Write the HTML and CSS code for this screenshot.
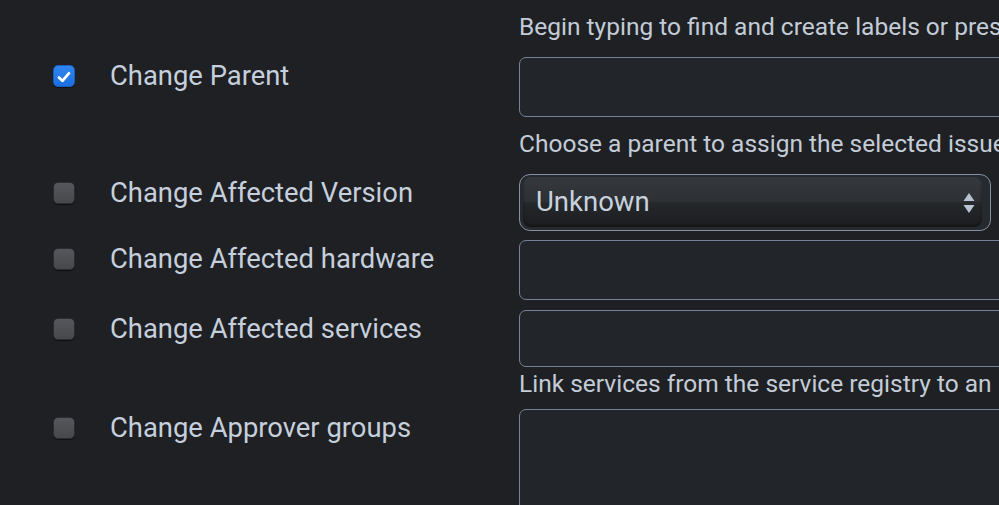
FILE: index.html
```html
<!DOCTYPE html>
<html lang="en">
<head>
<meta charset="utf-8">
<title>Bulk edit</title>
<link rel="stylesheet" href="styles.css">
</head>
<body>
<div class="form">
  <div class="row row-top">
    <div class="left"></div>
    <div class="right">
      <p class="help help-top">Begin typing to find and create labels or press down to select a suggested label.</p>
    </div>
  </div>

  <div class="row r1">
    <div class="left">
      <span class="cb checked"><svg viewBox="0 0 22 22" width="22" height="22"><path d="M5.5 11.5 L9.3 15.3 L16.5 6.8" fill="none" stroke="#fff" stroke-width="3" stroke-linecap="round" stroke-linejoin="round"/></svg></span>
      <span class="label">Change Parent</span>
    </div>
    <div class="right">
      <div class="input h60"></div>
      <p class="help help-1">Choose a parent to assign the selected issues to.</p>
    </div>
  </div>

  <div class="row r2">
    <div class="left">
      <span class="cb"></span>
      <span class="label">Change Affected Version</span>
    </div>
    <div class="right">
      <div class="select">
        <div class="select-inner">
          <span class="select-text">Unknown</span>
          <svg class="arrows" viewBox="0 0 14 22" width="14" height="22"><path d="M7 1 L12.5 9 L1.5 9 Z" fill="#b7c3d2"/><path d="M7 21 L12.5 13 L1.5 13 Z" fill="#b7c3d2"/></svg>
        </div>
      </div>
    </div>
  </div>

  <div class="row r3">
    <div class="left">
      <span class="cb"></span>
      <span class="label">Change Affected hardware</span>
    </div>
    <div class="right">
      <div class="input h60"></div>
    </div>
  </div>

  <div class="row r4">
    <div class="left">
      <span class="cb"></span>
      <span class="label">Change Affected services</span>
    </div>
    <div class="right">
      <div class="input h57"></div>
      <p class="help help-4">Link services from the service registry to an issue.</p>
    </div>
  </div>

  <div class="row r5">
    <div class="left">
      <span class="cb"></span>
      <span class="label">Change Approver groups</span>
    </div>
    <div class="right">
      <div class="input textarea"></div>
    </div>
  </div>
</div>
</body>
</html>
```

FILE: styles.css
```css
html, body {
  margin: 0;
  padding: 0;
  background: #1e2024;
  overflow: hidden;
  height: 505px;
}

.form {
  padding-top: 12px;
  font-family: Roboto, Inter, "Noto Sans", sans-serif;
  color: #c6cfdb;
}

.row {
  display: grid;
  grid-template-columns: 519px 620px;
}

.left {
  display: flex;
  align-items: center;
  height: 38px;
}

.row-top .left { height: auto; }

.cb {
  box-sizing: border-box;
  width: 22px;
  height: 22px;
  margin-left: 53px;
  margin-right: 35px;
  border-radius: 5px;
  background: linear-gradient(#55575c, #46484c);
  border: 1px solid #2b2d31;
  box-shadow: 0 1px 1px rgba(0,0,0,0.5);
  flex: none;
  display: flex;
}

.cb.checked {
  background: linear-gradient(#2f86f0, #1b6fe0);
  border-color: #1a5fc0;
}

.label {
  font-size: 27.4px;
  line-height: 30px;
  white-space: nowrap;
}

.help {
  margin: 0;
  font-size: 24.5px;
  line-height: 30px;
  white-space: nowrap;
  color: #c3ccd7;
}

.input {
  box-sizing: border-box;
  border: 1.5px solid #75839a;
  border-radius: 7px;
  background: #22262a;
}

.h60 { height: 60px; }
.h57 { height: 57px; }
.textarea { height: 130px; }

.r1 { margin-top: 15px; }
.help-1 { margin-top: 12px; }
.r2 { margin-top: 15px; }
.r3 { margin-top: 9px; }
.r4 { margin-top: 10px; }
.help-4 { margin-top: 2px; }
.r5 { margin-top: 10px; }

.select {
  box-sizing: border-box;
  width: 472px;
  height: 57px;
  border: 1.5px solid #8391a5;
  border-radius: 11px;
  background: #26292d;
  padding: 2px 8px 3px 3px;
}

.select-inner {
  height: 100%;
  border-radius: 8px;
  background: linear-gradient(#35383c 0%, #2d3034 48%, #25282b 52%, #1b1d20 100%);
  box-shadow: inset 0 -2px 3px rgba(0,0,0,0.35);
  display: flex;
  align-items: center;
  justify-content: space-between;
  padding: 0 6px 0 13px;
}

.select-text {
  font-size: 27.5px;
  line-height: 30px;
  color: #c8d2de;
}

.arrows {
  display: block;
  margin-top: 2px;
}
```
